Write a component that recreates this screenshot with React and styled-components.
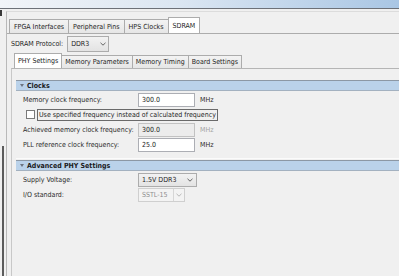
import React from 'react';
import styled, { createGlobalStyle } from 'styled-components';

const GlobalStyle = createGlobalStyle`
  html, body { margin: 0; padding: 0; }
  body {
    background: #f0f0f0;
    font-family: "DejaVu Sans Condensed", "Liberation Sans", sans-serif;
    font-size: 7px;
    color: #1e1e1e;
  }
  * { box-sizing: border-box; }
`;

const Window = styled.div`
  width: 399px;
  height: 276px;
  overflow: hidden;
  background: #f0f0f0;
  display: flex;
  flex-direction: column;
`;

const TitleBar = styled.div`
  flex: none;
  height: 9px;
  background: linear-gradient(to right, #f1f4f8 0%, #dbe6f2 45%, #a9c6e4 100%);
  border-bottom: 1px solid #6d7178;
`;

const Body = styled.div`
  flex: 1;
  display: flex;
`;

const Gutter = styled.div`
  width: 6px;
  flex: none;
  display: flex;
  flex-direction: column;
`;

const Grip = styled.div`
  margin-top: 1px;
  width: 2px;
  height: 6px;
  background: #3a3a3a;
`;

const Splitter = styled.div`
  margin-top: 130px;
  margin-left: 2px;
  flex: 1;
  width: 2px;
  background: #5c5c5c;
`;

const Outer = styled.div`
  flex: 1;
  margin-top: 2px;
  border-top: 1px solid #dcdcdc;
  border-left: 1px solid #b9b9b9;
  padding-top: 5px;
  display: flex;
  flex-direction: column;
`;

const TabRow = styled.div`
  display: flex;
  align-items: flex-end;
  padding-left: ${p => p.$indent}px;
  height: ${p => p.$height}px;
  flex: none;
`;

const Tab = styled.div`
  height: ${p => (p.$active ? p.$tall : p.$tall - 2)}px;
  padding: 0 ${p => p.$pad}px;
  display: flex;
  align-items: center;
  border: 1px solid #acacac;
  border-bottom: none;
  margin-left: -1px;
  background: ${p => (p.$active ? '#ffffff' : 'linear-gradient(#f3f3f3, #e6e6e6)')};
  white-space: nowrap;
  position: relative;
  z-index: ${p => (p.$active ? 1 : 0)};
`;

const Pane = styled.div`
  flex: 1;
  border-top: 1px solid #acacac;
  display: flex;
  flex-direction: column;
`;

const ProtocolRow = styled.div`
  margin-top: 2px;
  height: 16px;
  padding-left: 4px;
  display: flex;
  align-items: center;
  gap: 4px;
`;

const SubPane = styled.div`
  flex: 1;
  margin-left: 4px;
  border-top: 1px solid #b5b5b5;
  border-left: 1px solid #c8c8c8;
  padding: 11px 0 0 4px;
`;

const Section = styled.div`
  border-bottom: 1px solid ${p => (p.$divided ? '#fbfbfb' : 'transparent')};
  padding-bottom: ${p => p.$gap}px;
  margin-bottom: 1px;
`;

const SectionBar = styled.div`
  height: 11px;
  display: flex;
  align-items: center;
  gap: 3px;
  padding-left: 4px;
  background: #bad2ea;
  border-top: 1px solid #8c98a5;
  border-bottom: 1px solid #a3b1c0;
  font-weight: bold;
  color: #1a1a1a;
`;

const Triangle = styled.svg`
  width: 4px;
  height: 3px;
  flex: none;
`;

const Rows = styled.div`
  padding: 1px 0 0 7px;
`;

const Row = styled.div`
  height: 15px;
  display: flex;
  align-items: center;
`;

const Label = styled.div`
  width: 115px;
  flex: none;
  color: #2a2a2a;
`;

const Field = styled.div`
  width: 57px;
  height: 14px;
  padding-left: 3px;
  display: flex;
  align-items: center;
  background: ${p => (p.$disabled ? '#ececec' : '#ffffff')};
  border: 1px solid ${p => (p.$disabled ? '#c2c2c2' : '#acaeb4')};
  color: #222;
`;

const Unit = styled.div`
  margin-left: 5px;
  color: ${p => (p.$disabled ? '#a3a3a3' : '#2a2a2a')};
`;

const CheckBox = styled.div`
  width: 9px;
  height: 9px;
  margin: 0 2px 0 3px;
  border: 1px solid #7a7a7a;
  background: #fff;
`;

const FocusLabel = styled.div`
  height: 12px;
  padding: 0 1px;
  display: flex;
  align-items: center;
  border: 1px solid #6a6a6a;
  white-space: nowrap;
`;

const Combo = styled.div`
  width: ${p => p.$w}px;
  height: ${p => p.$h}px;
  display: flex;
  align-items: center;
  padding-left: 3px;
  border: 1px solid ${p => (p.$disabled ? '#cfcfcf' : '#acacac')};
  background: ${p => (p.$disabled ? '#f3f3f3' : 'linear-gradient(#f2f2f2, #e3e3e3)')};
  color: ${p => (p.$disabled ? '#8e8e8e' : '#1e1e1e')};
`;

const ComboText = styled.span`
  flex: 1;
`;

const ComboArrow = styled.div`
  width: ${p => p.$w}px;
  height: 100%;
  display: flex;
  align-items: center;
  justify-content: center;
  border-left: 1px solid ${p => (p.$split ? '#d6d6d6' : 'transparent')};
`;

const Chevron = ({ color = '#555' }) => (
  <svg width="6" height="4" viewBox="0 0 6 4">
    <path d="M0.5 0.8 L3 3.2 L5.5 0.8" fill="none" stroke={color} strokeWidth="0.9" />
  </svg>
);

const Header = ({ children }) => (
  <SectionBar>
    <Triangle viewBox="0 0 4 3">
      <path d="M0 0 H4 L2 3 Z" fill="#6c7480" />
    </Triangle>
    {children}
  </SectionBar>
);

const topTabs = ['FPGA Interfaces', 'Peripheral Pins', 'HPS Clocks', 'SDRAM'];
const subTabs = ['PHY Settings', 'Memory Parameters', 'Memory Timing', 'Board Settings'];

export default function App() {
  return (
    <Window>
      <GlobalStyle />
      <TitleBar />
      <Body>
        <Gutter>
          <Grip />
          <Splitter />
        </Gutter>
        <Outer>
          <TabRow $indent={3} $height={16}>
            {topTabs.map(t => (
              <Tab key={t} $active={t === 'SDRAM'} $tall={16} $pad={4}>{t}</Tab>
            ))}
          </TabRow>
          <Pane>
            <ProtocolRow>
              <span>SDRAM Protocol:</span>
              <Combo $w={42} $h={16}>
                <ComboText>DDR3</ComboText>
                <ComboArrow $w={12}><Chevron /></ComboArrow>
              </Combo>
            </ProtocolRow>
            <TabRow $indent={8} $height={16}>
              {subTabs.map(t => (
                <Tab key={t} $active={t === 'PHY Settings'} $tall={15} $pad={3}>{t}</Tab>
              ))}
            </TabRow>
            <SubPane>
              <Section $divided $gap={6}>
                <Header>Clocks</Header>
                <Rows>
                  <Row>
                    <Label>Memory clock frequency:</Label>
                    <Field>300.0</Field>
                    <Unit>MHz</Unit>
                  </Row>
                  <Row>
                    <CheckBox />
                    <FocusLabel>Use specified frequency instead of calculated frequency</FocusLabel>
                  </Row>
                  <Row>
                    <Label>Achieved memory clock frequency:</Label>
                    <Field $disabled>300.0</Field>
                    <Unit $disabled>MHz</Unit>
                  </Row>
                  <Row>
                    <Label>PLL reference clock frequency:</Label>
                    <Field>25.0</Field>
                    <Unit>MHz</Unit>
                  </Row>
                </Rows>
              </Section>
              <Section $gap={0}>
                <Header>Advanced PHY Settings</Header>
                <Rows>
                  <Row>
                    <Label>Supply Voltage:</Label>
                    <Combo $w={59} $h={14}>
                      <ComboText>1.5V DDR3</ComboText>
                      <ComboArrow $w={14}><Chevron /></ComboArrow>
                    </Combo>
                  </Row>
                  <Row>
                    <Label>I/O standard:</Label>
                    <Combo $w={47} $h={14} $disabled>
                      <ComboText>SSTL-15</ComboText>
                      <ComboArrow $w={11} $split><Chevron color="#b0b0b0" /></ComboArrow>
                    </Combo>
                  </Row>
                </Rows>
              </Section>
            </SubPane>
          </Pane>
        </Outer>
      </Body>
    </Window>
  );
}
